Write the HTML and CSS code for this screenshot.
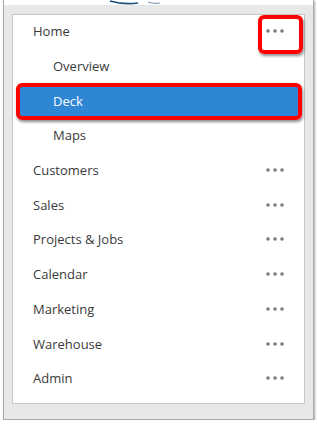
FILE: index.html
```html
<!DOCTYPE html>
<html>
<head>
	<title>Menu</title>
	<link rel="stylesheet" href="styles.css">
</head>
<body>

<div class="frame">
	<div class="top">
		<svg class="logo" width="80" height="5" viewBox="0 0 80 5">
			<path d="M8 1 Q22 5 36 3" stroke="#1d4f7c" stroke-width="1.6" fill="none"/>
			<path d="M46 2 Q52 4 58 3" stroke="#7c9cb8" stroke-width="1.2" fill="none"/>
		</svg>
	</div>
	<div class="body">
		<ul class="menu">
			<li class="item">
				<span>Home</span>
				<span class="more marked"><svg width="18" height="4"><circle cx="2" cy="2" r="1.8"/><circle cx="9" cy="2" r="1.8"/><circle cx="16" cy="2" r="1.8"/></svg></span>
			</li>
			<li class="item sub"><span>Overview</span></li>
			<li class="item sub active"><span>Deck</span></li>
			<li class="item sub"><span>Maps</span></li>
			<li class="item">
				<span>Customers</span>
				<span class="more"><svg width="18" height="4"><circle cx="2" cy="2" r="1.8"/><circle cx="9" cy="2" r="1.8"/><circle cx="16" cy="2" r="1.8"/></svg></span>
			</li>
			<li class="item">
				<span>Sales</span>
				<span class="more"><svg width="18" height="4"><circle cx="2" cy="2" r="1.8"/><circle cx="9" cy="2" r="1.8"/><circle cx="16" cy="2" r="1.8"/></svg></span>
			</li>
			<li class="item">
				<span>Projects &amp; Jobs</span>
				<span class="more"><svg width="18" height="4"><circle cx="2" cy="2" r="1.8"/><circle cx="9" cy="2" r="1.8"/><circle cx="16" cy="2" r="1.8"/></svg></span>
			</li>
			<li class="item">
				<span>Calendar</span>
				<span class="more"><svg width="18" height="4"><circle cx="2" cy="2" r="1.8"/><circle cx="9" cy="2" r="1.8"/><circle cx="16" cy="2" r="1.8"/></svg></span>
			</li>
			<li class="item">
				<span>Marketing</span>
				<span class="more"><svg width="18" height="4"><circle cx="2" cy="2" r="1.8"/><circle cx="9" cy="2" r="1.8"/><circle cx="16" cy="2" r="1.8"/></svg></span>
			</li>
			<li class="item">
				<span>Warehouse</span>
				<span class="more"><svg width="18" height="4"><circle cx="2" cy="2" r="1.8"/><circle cx="9" cy="2" r="1.8"/><circle cx="16" cy="2" r="1.8"/></svg></span>
			</li>
			<li class="item">
				<span>Admin</span>
				<span class="more"><svg width="18" height="4"><circle cx="2" cy="2" r="1.8"/><circle cx="9" cy="2" r="1.8"/><circle cx="16" cy="2" r="1.8"/></svg></span>
			</li>
		</ul>
	</div>
</div>

</body>
</html>
```

FILE: styles.css
```css
body{ margin: 0; padding: 0; background: #fff; font-family: "Open Sans", "Noto Sans", sans-serif; }

.frame{ margin-left: 3px; width: 309px; border: 1px solid #a9a9a9; border-top: none;
	background: #e8e8e8; box-shadow: 1px 1px 2px rgba(0,0,0,0.35); }
.top{ height: 5px; background: #fff; }
.logo{ display: block; margin-left: 98px; }
.body{ padding: 9px 8px 15px 8px; }

.menu{ list-style: none; margin: 0; padding: 0 0 6px 0; background: #fff; border: 1px solid #c6c6c6; }
.item{ height: 34.7px; display: flex; align-items: center; justify-content: space-between;
	padding: 0 20px 0 20px; font-size: 13px; color: #3a3a3a; position: relative; }
.item span{ margin-top: -2px; }
.sub{ padding-left: 40px; }

.active{ background: #2e86d5; color: #fff; margin: 0 6px 0 6px; padding-left: 34px; }
.active::after{ content: ""; position: absolute; left: -3px; right: -4px; top: -1.5px; bottom: -1px;
	border: 4px solid #f00; border-radius: 6px; box-shadow: 1px 2px 3px rgba(0,0,0,0.45); }

.more{ display: flex; }
.more svg{ display: block; fill: #7b7b7b; }
.marked{ position: relative; }
.marked::after{ content: ""; position: absolute; left: -8px; right: -19px; top: -14px; bottom: -21px;
	border: 4px solid #f00; border-radius: 6px; box-shadow: 1px 2px 3px rgba(0,0,0,0.45); }
```
